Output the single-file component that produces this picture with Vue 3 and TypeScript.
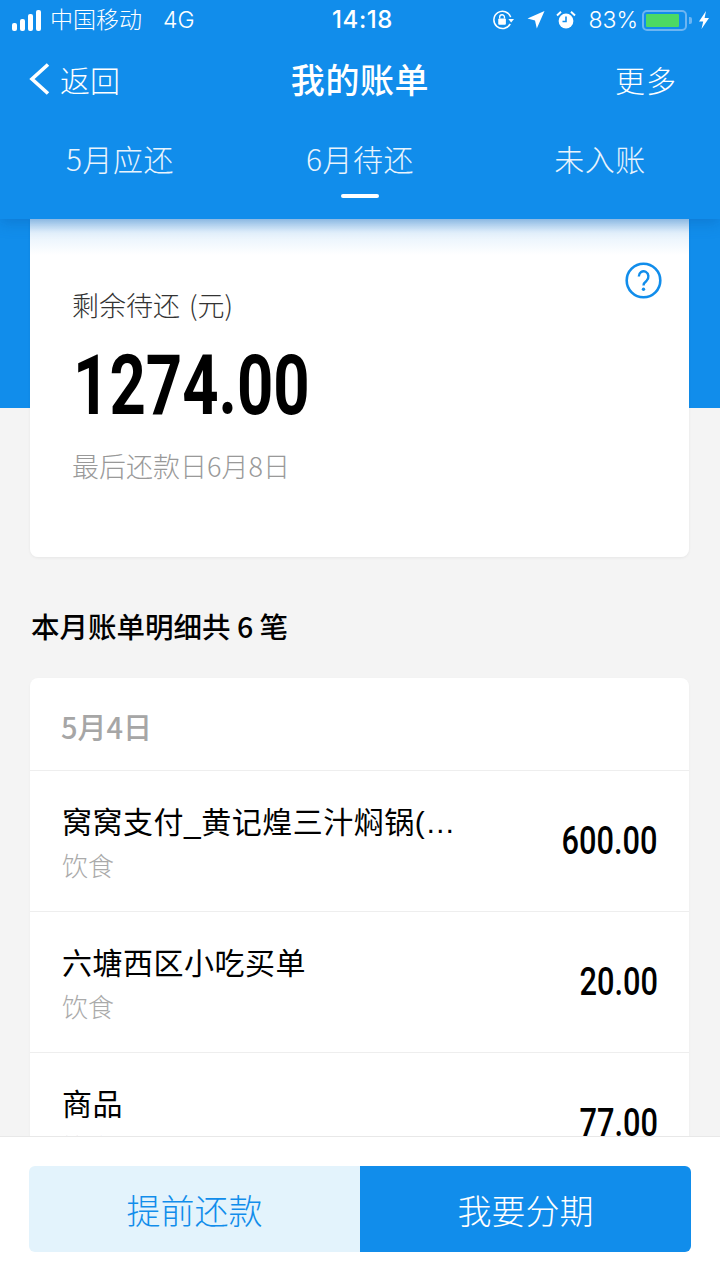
<script setup lang="ts">
interface Bill { title: string; cat: string; amount: string }
const bills: Bill[] = [
  { title: '窝窝支付_黄记煌三汁焖锅(…', cat: '饮食', amount: '600.00' },
  { title: '六塘西区小吃买单', cat: '饮食', amount: '20.00' },
  { title: '商品', cat: '饮食', amount: '77.00' },
]
const tabs = ['5月应还', '6月待还', '未入账']
const active = 1
const signal = [8, 12, 17, 21]
</script>

<template>
  <div class="page">
    <header class="head">
      <div class="status">
        <div class="st-left">
          <div class="bars"><i v-for="h in signal" :key="h" class="bar" :style="{ height: h + 'px' }"></i></div>
          <span class="carrier">中国移动</span>
          <span class="net">4G</span>
        </div>
        <span class="time">14:18</span>
        <div class="st-right">
          <svg class="ic-lock" width="23" height="22" viewBox="0 0 24 22">
            <path d="M19.5 8A9 9 0 1 0 19 15" fill="none" stroke="#fff" stroke-width="1.6"/>
            <path d="M17 10h6l-3 3.6z" fill="#fff"/>
            <rect x="6.5" y="9.5" width="8" height="6.5" rx="1" fill="#fff"/>
            <path d="M8 9.5V8a2.5 2.5 0 0 1 5 0v1.5" fill="none" stroke="#fff" stroke-width="1.4"/>
          </svg>
          <svg class="ic-loc" width="18" height="20" viewBox="0 0 18 20"><path d="M17.5 1 9.8 18.5 8 10.5.5 8.6z" fill="#fff"/></svg>
          <svg class="ic-alarm" width="20" height="20" viewBox="0 0 20 20">
            <circle cx="10" cy="11" r="7.4" fill="#fff"/>
            <path d="M10 6.5V11.5H6.5" fill="none" stroke="#118deb" stroke-width="1.6"/>
            <path d="M1 5.5 5 1.8M19 5.5 15 1.8" stroke="#fff" stroke-width="2"/>
          </svg>
          <span class="pct">83%</span>
          <div class="batt"><div class="batt-fill"></div></div>
          <i class="batt-tip"></i>
          <svg class="ic-bolt" width="12" height="20" viewBox="0 0 12 20"><path d="M8 1 1 11.5h4.2L3.5 19 11 8H6.6z" fill="#fff"/></svg>
        </div>
      </div>
      <nav class="nav">
        <div class="back">
          <svg width="24" height="34" viewBox="0 0 24 34"><path d="M21 2.5 5 17l16 14.5" fill="none" stroke="#fff" stroke-width="3.6"/></svg>
          <span>返回</span>
        </div>
        <h1 class="title">我的账单</h1>
        <span class="more">更多</span>
      </nav>
      <div class="tabs">
        <div v-for="(t, i) in tabs" :key="t" class="tab">
          <span>{{ t }}</span>
          <i v-if="i === active" class="ink"></i>
        </div>
      </div>
    </header>

    <main class="body">
      <section class="summary">
        <svg class="help" width="37" height="37" viewBox="0 0 37 37">
          <circle cx="18.5" cy="18.5" r="16.8" fill="none" stroke="#118deb" stroke-width="2.6"/>
          <path d="M13.8 14.5a4.8 5.3 0 1 1 7.8 4.2c-2 1.6-3.1 2.6-3.1 4.8" fill="none" stroke="#118deb" stroke-width="2.4"/>
          <circle cx="18.5" cy="27.3" r="1.7" fill="#118deb"/>
        </svg>
        <div class="sum-label">剩余待还 (元)</div>
        <div class="sum-value"><span>1274.00</span></div>
        <div class="sum-date">最后还款日6月8日</div>
      </section>

      <h2 class="section-title">本月账单明细共 6 笔</h2>

      <section class="list">
        <div class="date">5月4日</div>
        <div v-for="b in bills" :key="b.title" class="row">
          <div class="row-main">
            <div class="row-title">{{ b.title }}</div>
            <div class="row-cat">{{ b.cat }}</div>
          </div>
          <div class="row-amt">{{ b.amount }}</div>
        </div>
      </section>
    </main>

    <footer class="foot">
      <div class="btns">
        <button class="btn light">提前还款</button>
        <button class="btn solid">我要分期</button>
      </div>
    </footer>
  </div>
</template>

<style scoped>
.page {
  width: 720px;
  height: 1280px;
  display: flex;
  flex-direction: column;
  overflow: hidden;
  font-family: "Noto Sans CJK SC", "Noto Sans", sans-serif;
  background: #f4f4f4;
}
.head {
  height: 219px;
  flex: none;
  background: #118deb;
  color: #fff;
  box-shadow: 0 3px 14px rgba(10, 90, 170, 0.4);
  position: relative;
  z-index: 2;
}
.status {
  height: 40px;
  display: grid;
  grid-template-columns: 1fr auto 1fr;
  align-items: center;
  padding: 0 10px 0 12px;
  font-size: 23px;
  line-height: 30px;
}
.st-left { display: flex; align-items: center; }
.bars { display: flex; align-items: flex-end; gap: 3px; height: 21px; margin-right: 9px; }
.bar { width: 5px; background: #fff; border-radius: 2px; }
.carrier { font-weight: 300; margin-top: -4px; }
.net { margin-left: 21px; font-family: "Inter", sans-serif; font-size: 23px; font-weight: 300; }
.time { font-family: "Inter", sans-serif; font-weight: 500; font-size: 24px; letter-spacing: 0.6px; margin-left: 3px; }
.st-right { display: flex; align-items: center; justify-content: flex-end; }
.ic-loc { margin-left: 12px; }
.ic-alarm { margin-left: 11px; }
.pct { font-family: "Inter", sans-serif; font-size: 23px; font-weight: 300; margin-left: 12px; }
.batt {
  width: 45px;
  height: 21px;
  margin-left: 4px;
  padding: 2px;
  box-sizing: border-box;
  border: 2px solid #6db5f2;
  border-radius: 5px;
}
.batt-fill { width: 33px; height: 100%; background: #4cd964; border-radius: 1px; }
.batt-tip { width: 3px; height: 7px; background: #6db5f2; margin-left: 2px; border-radius: 0 2px 2px 0; }
.ic-bolt { margin-left: 6px; }
.nav {
  height: 80px;
  display: grid;
  grid-template-columns: 1fr auto 1fr;
  align-items: center;
  padding: 0 27px;
}
.back { display: flex; align-items: center; gap: 9px; font-size: 30px; font-weight: 300; line-height: 40px; margin-top: -2px; }
.title { margin: -3px 0 0; font-size: 34px; font-weight: 500; line-height: 44px; letter-spacing: 0.6px; }
.more { justify-self: end; font-size: 30px; font-weight: 300; letter-spacing: 1px; margin: -3px 16px 0 0; }
.tabs { display: grid; grid-template-columns: repeat(3, 240px); height: 99px; }
.tab {
  position: relative;
  text-align: center;
  font-size: 30px;
  font-weight: 300;
  line-height: 44px;
  padding-top: 16px;
  letter-spacing: 0.5px;
  color: #e9f4fd;
}
.ink {
  position: absolute;
  left: 101px;
  top: 74px;
  width: 38px;
  height: 4px;
  background: #fff;
  border-radius: 2px;
}
.body {
  flex: 1;
  min-height: 0;
  overflow: hidden;
  padding: 0 31px 0 30px;
  background: linear-gradient(#118deb 189px, #f4f4f4 189px);
}
.summary {
  position: relative;
  height: 338px;
  box-sizing: border-box;
  padding: 68px 42px 0;
  border-radius: 0 0 8px 8px;
  background: linear-gradient(#bcdcf7, #e6f2fc 14px, #fff 36px);
  box-shadow: 0 1px 3px rgba(0, 0, 0, 0.06);
}
.help { position: absolute; right: 27px; top: 43px; }
.sum-label { font-size: 27px; line-height: 38px; font-weight: 300; color: #333; word-spacing: 3px; margin-top: -1px; }
.sum-value {
  margin-top: 14px;
  font-family: "Roboto", sans-serif;
  font-size: 84px;
  line-height: 96px;
  font-weight: 700;
  color: #000;
}
.sum-value span { display: inline-block; transform: scaleX(0.755); transform-origin: 0 50%; margin-left: 1px; }
.sum-date { margin-top: 13px; font-size: 27px; line-height: 38px; font-weight: 300; color: #999; }
.section-title { margin: 49px 0 32px 1px; font-size: 28.5px; line-height: 40px; font-weight: 500; color: #000; }
.list { background: #fff; border-radius: 8px 8px 0 0; box-shadow: 0 1px 3px rgba(0, 0, 0, 0.04); }
.date {
  height: 92px;
  padding-left: 31px;
  font-size: 29px;
  font-weight: 500;
  line-height: 96px;
  color: #a6a6a6;
  border-bottom: 1px solid #eee;
}
.row {
  height: 140px;
  display: flex;
  align-items: center;
  justify-content: space-between;
  padding: 0 31px 0 32px;
  border-bottom: 1px solid #eee;
}
.row-title { font-family: "Liberation Sans", "Noto Sans CJK SC", sans-serif; font-size: 30px; letter-spacing: 0.5px; line-height: 44px; padding-top: 3px; color: #000; font-weight: 400; }
.row-cat { font-size: 26px; line-height: 38px; margin-top: 1px; color: #aaa; font-weight: 300; }
.row-amt {
  font-family: "Roboto", sans-serif;
  font-size: 38px;
  font-weight: 500;
  color: #000;
  transform: scaleX(0.81);
  transform-origin: 100% 50%;
}
.foot {
  height: 144px;
  flex: none;
  box-sizing: border-box;
  padding: 29px 29px 0;
  background: #fff;
  border-top: 1px solid #e8e8e8;
  position: relative;
  z-index: 2;
}
.btns { display: grid; grid-template-columns: 331px 331px; height: 86px; border-radius: 6px; overflow: hidden; }
.btn {
  border: 0;
  padding: 0;
  font-family: inherit;
  font-size: 34px;
  font-weight: 300;
}
.light { background: #e3f3fc; color: #118deb; }
.solid { background: #118deb; color: #fff; }
</style>
